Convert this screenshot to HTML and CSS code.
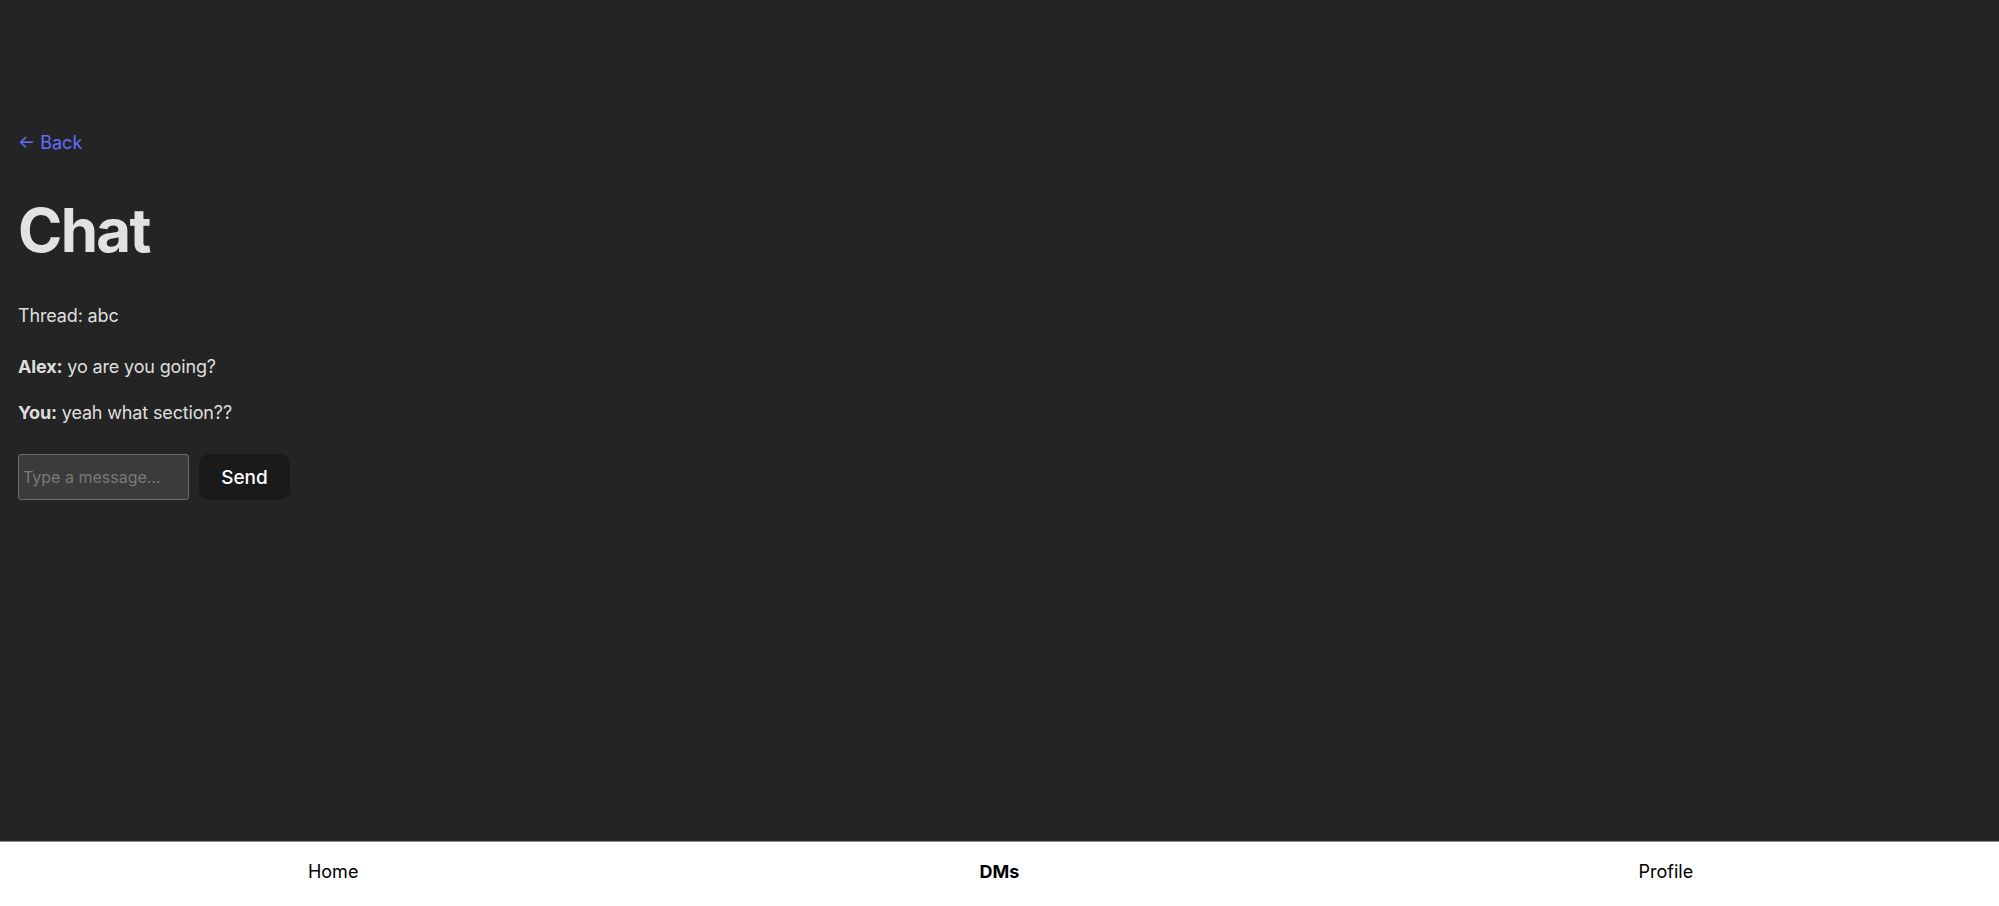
FILE: index.html
```html
<!DOCTYPE html>
<html>
<head>
    <title>Chat</title>
    <meta charset="utf-8">
    <link rel="stylesheet" href="styles.css">
</head>
<body>

<div class="page">
    <div class="top">
        <a class="back" href="#">&larr; Back</a>
    </div>

    <h1>Chat</h1>

    <div class="thread">Thread: abc</div>

    <div class="messages">
        <div class="msg"><b>Alex:</b> yo are you going?</div>
        <div class="msg"><b>You:</b> yeah what section??</div>
    </div>

    <form class="composer" onsubmit="return false">
        <input id="message" type="text" placeholder="Type a message...">
        <button type="submit">Send</button>
    </form>
</div>

<nav class="tabs">
    <a href="#">Home</a>
    <a href="#" class="active">DMs</a>
    <a href="#">Profile</a>
</nav>

</body>
</html>
```

FILE: styles.css
```css
html, body {
    height: 100%;
}

body {
    margin: 0px;
    display: flex;
    flex-direction: column;
    background-color: #242424;
    color: rgba(255, 255, 255, 0.87);
    font-family: Inter, "Liberation Sans", sans-serif;
}

.page {
    flex: 1;
    padding: 0px 18px;
}

.top {
    margin-top: 131px;
}

.back {
    font-size: 18px;
    line-height: 24px;
    color: #646cff;
    text-decoration: none;
}

h1 {
    margin: 41px 0px 0px;
    font-size: 60px;
    line-height: 68px;
    font-weight: 700;
    letter-spacing: -1.7px;
}

.thread {
    margin-top: 40px;
    font-size: 18px;
    line-height: 24px;
    letter-spacing: -0.15px;
}

.messages {
    margin-top: 27px;
    display: flex;
    flex-direction: column;
    gap: 22px;
}

.msg {
    font-size: 18px;
    line-height: 24px;
    letter-spacing: -0.15px;
}

.composer {
    margin-top: 29px;
    display: flex;
    gap: 10px;
}

.composer input {
    box-sizing: border-box;
    width: 171px;
    height: 46px;
    padding: 0px 4px;
    border: 1px solid #6c6c6c;
    border-radius: 3px;
    background-color: #3b3b3b;
    color: #e0e0e0;
    font: 16px Inter, "Liberation Sans", sans-serif;
}

.composer input::placeholder {
    color: #7a7a7a;
}

.composer button {
    width: 91px;
    height: 46px;
    border: none;
    border-radius: 10px;
    background-color: #1a1a1a;
    color: #ffffff;
    font: 500 19px Inter, "Liberation Sans", sans-serif;
}

.tabs {
    height: 58px;
    padding-bottom: 6px;
    border-top: 1px solid #8a8a8a;
    background-color: #ffffff;
    display: flex;
}

.tabs a {
    flex: 1;
    display: flex;
    align-items: center;
    justify-content: center;
    font-size: 18px;
    color: #000000;
    text-decoration: none;
}

.tabs a.active {
    font-weight: 700;
}
```
